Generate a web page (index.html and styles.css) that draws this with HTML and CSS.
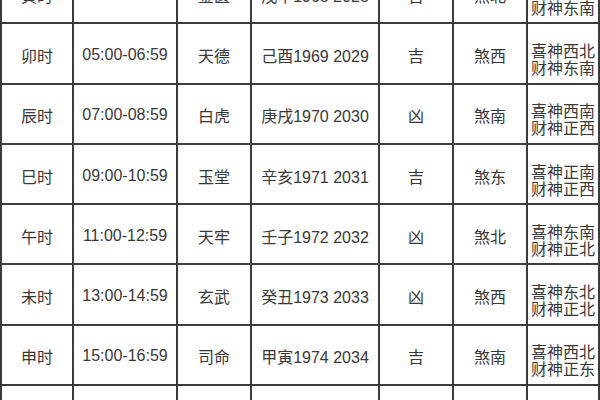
FILE: index.html
```html
<!DOCTYPE html>
<html lang="zh">
<head>
<meta charset="utf-8">
<title>时辰吉凶表</title>
<link rel="stylesheet" href="styles.css">
</head>
<body>
<div class="viewport">
<table class="hours">
<colgroup>
<col class="c1"><col class="c2"><col class="c3"><col class="c4"><col class="c5"><col class="c6"><col class="c7">
</colgroup>
<tbody>
<tr><td>寅时</td><td>03:00-04:59</td><td>金匮</td><td>戊申1968 2028</td><td>吉</td><td>煞北</td><td class="gods">喜神东北<br>财神东南</td></tr>
<tr><td>卯时</td><td>05:00-06:59</td><td>天德</td><td>己酉1969 2029</td><td>吉</td><td>煞西</td><td class="gods">喜神西北<br>财神东南</td></tr>
<tr><td>辰时</td><td>07:00-08:59</td><td>白虎</td><td>庚戌1970 2030</td><td>凶</td><td>煞南</td><td class="gods">喜神西南<br>财神正西</td></tr>
<tr><td>巳时</td><td>09:00-10:59</td><td>玉堂</td><td>辛亥1971 2031</td><td>吉</td><td>煞东</td><td class="gods">喜神正南<br>财神正西</td></tr>
<tr><td>午时</td><td>11:00-12:59</td><td>天牢</td><td>壬子1972 2032</td><td>凶</td><td>煞北</td><td class="gods">喜神东南<br>财神正北</td></tr>
<tr><td>未时</td><td>13:00-14:59</td><td>玄武</td><td>癸丑1973 2033</td><td>凶</td><td>煞西</td><td class="gods">喜神东北<br>财神正北</td></tr>
<tr><td>申时</td><td>15:00-16:59</td><td>司命</td><td>甲寅1974 2034</td><td>吉</td><td>煞南</td><td class="gods">喜神西北<br>财神正东</td></tr>
<tr><td>酉时</td><td>17:00-18:59</td><td>勾陈</td><td>乙卯1975 2035</td><td>凶</td><td>煞东</td><td class="gods">喜神西南<br>财神正东</td></tr>
</tbody>
</table>
</div>
</body>
</html>
```
FILE: styles.css
```css
html, body {
  margin: 0;
  padding: 0;
  background: #ffffff;
}
.viewport {
  width: 600px;
  height: 400px;
  overflow: hidden;
}
.hours {
  margin-top: -38px;
  width: 598px;
  table-layout: fixed;
  border-collapse: collapse;
  font-family: "Liberation Sans", "Noto Sans CJK SC", sans-serif;
  font-size: 16px;
  color: #383838;
}
.c1 { width: 72px; }
.c2 { width: 104px; }
.c3 { width: 74px; }
.c4 { width: 128px; }
.c5 { width: 74px; }
.c6 { width: 74px; }
.c7 { width: 72px; }
.hours td {
  border: 2px solid #3c3c3c;
  height: 60.3px;
  padding: 3px 0 0;
  text-align: center;
  vertical-align: middle;
  white-space: nowrap;
  box-sizing: border-box;
}
.hours td.gods {
  line-height: 17px;
  padding-top: 13px;
}
```
